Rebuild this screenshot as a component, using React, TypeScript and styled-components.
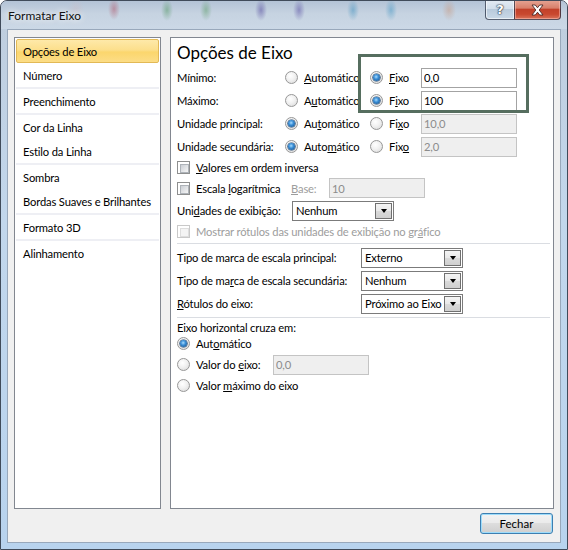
import React from "react";
import styled, { createGlobalStyle, css } from "styled-components";

const Global = createGlobalStyle`
  html, body { margin: 0; padding: 0; background: #ffffff; }
  body { font-family: Lato, "Noto Sans", sans-serif; font-size: 11.2px; letter-spacing: -0.15px; color: #000; }
  * { box-sizing: border-box; }
`;

const Window = styled.div`
  width: 568px;
  height: 550px;
  display: flex;
  flex-direction: column;
  border: 1px solid #404b5a;
  border-radius: 7px 7px 0 0;
  overflow: hidden;
  background: linear-gradient(180deg, #bfcddd 0%, #c2d7ec 40%, #b8d3ee 100%);
`;

const TitleBar = styled.div`
  height: 28px;
  flex: none;
  display: flex;
  align-items: flex-start;
  justify-content: space-between;
  padding-left: 7px;
  background:
    radial-gradient(ellipse 8px 11px at 75px 8px, rgba(200, 190, 200, 0.5), transparent),
    radial-gradient(ellipse 6px 11px at 113px 8px, rgba(175, 95, 115, 0.55), transparent),
    radial-gradient(ellipse 6px 11px at 166px 9px, rgba(100, 160, 120, 0.6), transparent),
    radial-gradient(ellipse 6px 11px at 205px 9px, rgba(110, 165, 125, 0.6), transparent),
    radial-gradient(ellipse 6px 11px at 260px 9px, rgba(105, 100, 170, 0.65), transparent),
    radial-gradient(ellipse 6px 11px at 298px 9px, rgba(110, 105, 175, 0.65), transparent),
    radial-gradient(ellipse 6px 11px at 352px 9px, rgba(85, 155, 195, 0.6), transparent),
    radial-gradient(ellipse 6px 11px at 390px 9px, rgba(90, 160, 200, 0.6), transparent),
    radial-gradient(ellipse 7px 11px at 448px 9px, rgba(200, 160, 140, 0.55), transparent),
    linear-gradient(180deg, #b3c3d6 0%, #c6d3e1 45%, #cbd8e6 100%);
`;

const Title = styled.div`
  font-size: 12px;
  letter-spacing: 0;
  line-height: 28px;
  padding-top: 1px;
  color: #111;
  text-shadow: 0 0 6px rgba(255, 255, 255, 0.9), 0 0 10px rgba(255, 255, 255, 0.7);
`;

const CaptionButtons = styled.div`
  display: flex;
  margin-right: 6px;
  margin-top: -1px;
`;

const CaptionButton = styled.div<{ $kind: "help" | "close" }>`
  height: 20px;
  display: flex;
  align-items: center;
  justify-content: center;
  border: 1px solid rgba(40, 50, 70, 0.75);
  border-top: none;
  ${(p) =>
    p.$kind === "help"
      ? css`
          width: 29px;
          border-radius: 0 0 0 4px;
          border-right: none;
          background: linear-gradient(180deg, #e4ebf3 0%, #d3dfeb 45%, #b9cadb 50%, #c9d8e7 100%);
          box-shadow: inset 0 0 0 1px rgba(255, 255, 255, 0.6);
        `
      : css`
          width: 47px;
          border-radius: 0 0 4px 0;
          background: linear-gradient(180deg, #e6a595 0%, #d8806b 42%, #c2412a 50%, #c9482f 75%, #d9735a 100%);
          box-shadow: inset 0 0 0 1px rgba(255, 200, 190, 0.5);
        `}
`;

const HelpGlyph = styled.span`
  font-family: "DejaVu Sans", sans-serif;
  font-weight: bold;
  font-size: 13px;
  line-height: 1;
  color: #fff;
  text-shadow: 0 0 1px #2a3342, 0 0 1px #2a3342, 0 0 2px #2a3342;
`;

const Client = styled.div`
  flex: 1;
  margin: 0 6px 6px 6px;
  border: 1px solid #98a8bb;
  background: #f0f0f0;
  display: flex;
  flex-direction: column;
  padding: 7px 6px 8px 6px;
`;

const Panels = styled.div`
  height: 472px;
  display: flex;
  gap: 9px;
`;

const Panel = styled.div`
  border: 1px solid #828790;
  background: #fff;
`;

const NavPanel = styled(Panel)`
  width: 147px;
  flex: none;
  padding: 1px 0;
  display: flex;
  flex-direction: column;
`;

const NavItem = styled.div<{ $selected?: boolean }>`
  height: 24px;
  margin: 0 1px;
  padding-left: 6px;
  display: flex;
  align-items: center;
  white-space: nowrap;
  border: 1px solid transparent;
  ${(p) =>
    p.$selected &&
    css`
      border-color: #e2b956;
      border-radius: 2px;
      background: linear-gradient(180deg, #fee9a9 0%, #fcdf8c 45%, #fbd66d 55%, #fcdd86 100%);
    `}
`;

const NavSep = styled.div`
  height: 2px;
  margin: 0 1px;
  background: #eeeff4;
`;

const OptionsPanel = styled(Panel)`
  flex: 1;
  position: relative;
  padding-left: 6px;
  display: flex;
  flex-direction: column;
`;

const PanelTitle = styled.div`
  height: 28px;
  padding-top: 5px;
  font-size: 17px;
  letter-spacing: 0;
  line-height: 20px;
`;

const AxisGrid = styled.div`
  display: grid;
  grid-template-columns: 108px 85px 51px 96px;
  grid-auto-rows: 23px;
  align-items: center;
`;

const Row = styled.div<{ $h: number }>`
  height: ${(p) => p.$h}px;
  display: flex;
  align-items: center;
  white-space: nowrap;
`;

const Cell = styled.div<{ $w: number }>`
  width: ${(p) => p.$w}px;
  flex: none;
  display: flex;
  align-items: center;
  white-space: nowrap;
`;

const Text = styled.span<{ $disabled?: boolean }>`
  white-space: nowrap;
  color: ${(p) => (p.$disabled ? "#9d9d9d" : "#000")};
`;

const Key = styled.span`
  text-decoration: underline;
  text-underline-offset: 1px;
`;

const Option = styled.label`
  display: flex;
  align-items: center;
  gap: 6px;
  white-space: nowrap;
`;

const Radio = styled.span<{ $on?: boolean }>`
  position: relative;
  flex: none;
  width: 13px;
  height: 13px;
  border-radius: 50%;
  border: 1px solid #979797;
  background: radial-gradient(circle at 40% 35%, #ffffff 0%, #f1f1f1 45%, #d6d6d6 100%);
  ${(p) =>
    p.$on &&
    css`
      &::after {
        content: "";
        position: absolute;
        left: 2px;
        top: 2px;
        width: 7px;
        height: 7px;
        border-radius: 50%;
        background: radial-gradient(circle at 45% 40%, #a7dcff 0%, #3a8ed6 40%, #11467e 100%);
        box-shadow: 0 0 0 0.6px #1a3f66;
      }
    `}
`;

const Check = styled.span<{ $disabled?: boolean }>`
  flex: none;
  width: 13px;
  height: 13px;
  padding: 2px;
  border: 1px solid ${(p) => (p.$disabled ? "#c9c9c9" : "#8e8f8f")};
  background: #fff;
  &::after {
    content: "";
    display: block;
    width: 100%;
    height: 100%;
    border: 1px solid ${(p) => (p.$disabled ? "#dedede" : "#aeb3b9")};
    background: ${(p) =>
      p.$disabled ? "#f4f4f4" : "linear-gradient(135deg, #cbcfd5 0%, #f6f6f6 100%)"};
  }
`;

const TextBox = styled.input<{ $w?: number }>`
  width: ${(p) => p.$w ?? 96}px;
  height: 20px;
  margin: 0;
  padding: 0 0 0 2px;
  font: inherit;
  letter-spacing: inherit;
  color: #000;
  background: #fff;
  border: 1px solid #a3a3a3;
  outline: none;
  &:disabled {
    color: #8c8c8c;
    background: #efefef;
    border-color: #c4c4c4;
  }
`;

const Select = styled.div<{ $w: number }>`
  width: ${(p) => p.$w}px;
  height: 20px;
  flex: none;
  display: flex;
  border: 1px solid #7b7b7b;
  background: #fff;
`;

const SelectText = styled.span`
  flex: 1;
  padding-left: 3px;
  line-height: 18px;
  white-space: nowrap;
  overflow: hidden;
`;

const SelectButton = styled.span`
  width: 17px;
  flex: none;
  margin: 1px;
  border: 1px solid #707070;
  background: linear-gradient(180deg, #f4f4f4 0%, #e8e8e8 50%, #dadada 50%, #cfcfcf 100%);
  display: flex;
  align-items: center;
  justify-content: center;
  &::before {
    content: "";
    border-left: 3.5px solid transparent;
    border-right: 3.5px solid transparent;
    border-top: 4px solid #000;
  }
`;

const Separator = styled.div`
  height: 1px;
  margin: 2px 3px 2px 0;
  background: #dadde2;
  flex: none;
`;

const Highlight = styled.div`
  position: absolute;
  left: 187px;
  top: 16px;
  width: 171px;
  height: 59px;
  border: 3px solid #566e5f;
  pointer-events: none;
`;

const Footer = styled.div`
  display: flex;
  justify-content: flex-end;
  margin-top: 4px;
  padding-right: 1px;
`;

const Button = styled.button`
  width: 73px;
  height: 21px;
  font: inherit;
  font-size: 11.5px;
  letter-spacing: 0;
  color: #000;
  padding: 0;
  border: 1px solid #3c7fb1;
  border-radius: 3px;
  background: linear-gradient(180deg, #f3f3f3 0%, #ebebeb 45%, #dddddd 50%, #cfcfcf 100%);
  box-shadow: inset 0 0 0 1px #9ddcfb;
`;

const navItems: { label: string; sepAfter?: boolean }[] = [
  { label: "Opções de Eixo" },
  { label: "Número", sepAfter: true },
  { label: "Preenchimento", sepAfter: true },
  { label: "Cor da Linha" },
  { label: "Estilo da Linha", sepAfter: true },
  { label: "Sombra" },
  { label: "Bordas Suaves e Brilhantes", sepAfter: true },
  { label: "Formato 3D", sepAfter: true },
  { label: "Alinhamento" },
];

const K = (word: string, index: number, len = 1) => (
  <>
    {word.slice(0, index)}
    <Key>{word.slice(index, index + len)}</Key>
    {word.slice(index + len)}
  </>
);

const axisRows = [
  { label: "Mínimo:", auto: false, autoKey: 0, fixKey: 0, value: "0,0" },
  { label: "Máximo:", auto: false, autoKey: 1, fixKey: 1, value: "100" },
  { label: "Unidade principal:", auto: true, autoKey: 2, fixKey: 2, value: "10,0" },
  { label: "Unidade secundária:", auto: true, autoKey: 4, fixKey: 3, value: "2,0" },
];

export default function App() {
  return (
    <>
      <Global />
      <Window>
        <TitleBar>
          <Title>Formatar Eixo</Title>
          <CaptionButtons>
            <CaptionButton $kind="help">
              <HelpGlyph>?</HelpGlyph>
            </CaptionButton>
            <CaptionButton $kind="close">
              <svg width="15" height="12" viewBox="0 0 15 12">
                <path
                  d="M2 1 H5.3 L7.5 3.8 L9.7 1 H13 L9.2 6 L13 11 H9.7 L7.5 8.2 L5.3 11 H2 L5.8 6 Z"
                  fill="#ffffff"
                  stroke="#4b2a28"
                  strokeWidth="0.9"
                  strokeLinejoin="round"
                />
              </svg>
            </CaptionButton>
          </CaptionButtons>
        </TitleBar>
        <Client>
          <Panels>
            <NavPanel>
              {navItems.map((it, i) => (
                <React.Fragment key={it.label}>
                  <NavItem $selected={i === 0}>{it.label}</NavItem>
                  {it.sepAfter && <NavSep />}
                </React.Fragment>
              ))}
            </NavPanel>
            <OptionsPanel>
              <PanelTitle>Opções de Eixo</PanelTitle>
              <AxisGrid>
                {axisRows.map((r) => (
                  <React.Fragment key={r.label}>
                    <Text>{r.label}</Text>
                    <Option>
                      <Radio $on={r.auto} />
                      <Text>{K("Automático", r.autoKey)}</Text>
                    </Option>
                    <Option>
                      <Radio $on={!r.auto} />
                      <Text>{K("Fixo", r.fixKey)}</Text>
                    </Option>
                    <TextBox readOnly disabled={r.auto} defaultValue={r.value} />
                  </React.Fragment>
                ))}
              </AxisGrid>
              <Row $h={19}>
                <Option>
                  <Check />
                  <Text>{K("Valores em ordem inversa", 0)}</Text>
                </Option>
              </Row>
              <Row $h={22}>
                <Cell $w={114}>
                  <Option>
                    <Check />
                    <Text>
                      Escala <Key>l</Key>ogarítmica
                    </Text>
                  </Option>
                </Cell>
                <Cell $w={38}>
                  <Text $disabled>{K("Base:", 0)}</Text>
                </Cell>
                <TextBox readOnly disabled defaultValue="10" />
              </Row>
              <Row $h={23}>
                <Cell $w={115}>
                  <Text>
                    Uni<Key>d</Key>ades de exibição:
                  </Text>
                </Cell>
                <Select $w={102}>
                  <SelectText>Nenhum</SelectText>
                  <SelectButton />
                </Select>
              </Row>
              <Row $h={19}>
                <Option>
                  <Check $disabled />
                  <Text $disabled>
                    Mostrar rótulos das unidades de exibição no gr<Key>á</Key>fico
                  </Text>
                </Option>
              </Row>
              <Separator />
              <Row $h={23}>
                <Cell $w={184}>
                  <Text>Tipo de marca de escala principal:</Text>
                </Cell>
                <Select $w={102}>
                  <SelectText>Externo</SelectText>
                  <SelectButton />
                </Select>
              </Row>
              <Row $h={23}>
                <Cell $w={184}>
                  <Text>
                    Tipo de ma<Key>r</Key>ca de escala secundária:
                  </Text>
                </Cell>
                <Select $w={102}>
                  <SelectText>Nenhum</SelectText>
                  <SelectButton />
                </Select>
              </Row>
              <Row $h={23}>
                <Cell $w={184}>
                  <Text>{K("Rótulos do eixo:", 0)}</Text>
                </Cell>
                <Select $w={102}>
                  <SelectText>Próximo ao Eixo</SelectText>
                  <SelectButton />
                </Select>
              </Row>
              <Separator />
              <Row $h={15}>
                <Text>Eixo horizontal cruza em:</Text>
              </Row>
              <Row $h={17}>
                <Option>
                  <Radio $on />
                  <Text>{K("Automático", 3)}</Text>
                </Option>
              </Row>
              <Row $h={25}>
                <Cell $w={96}>
                  <Option>
                    <Radio />
                    <Text>
                      Valor do <Key>e</Key>ixo:
                    </Text>
                  </Option>
                </Cell>
                <TextBox readOnly disabled defaultValue="0,0" />
              </Row>
              <Row $h={16}>
                <Option>
                  <Radio />
                  <Text>
                    Valor <Key>m</Key>áximo do eixo
                  </Text>
                </Option>
              </Row>
              <Highlight />
            </OptionsPanel>
          </Panels>
          <Footer>
            <Button>Fechar</Button>
          </Footer>
        </Client>
      </Window>
    </>
  );
}
